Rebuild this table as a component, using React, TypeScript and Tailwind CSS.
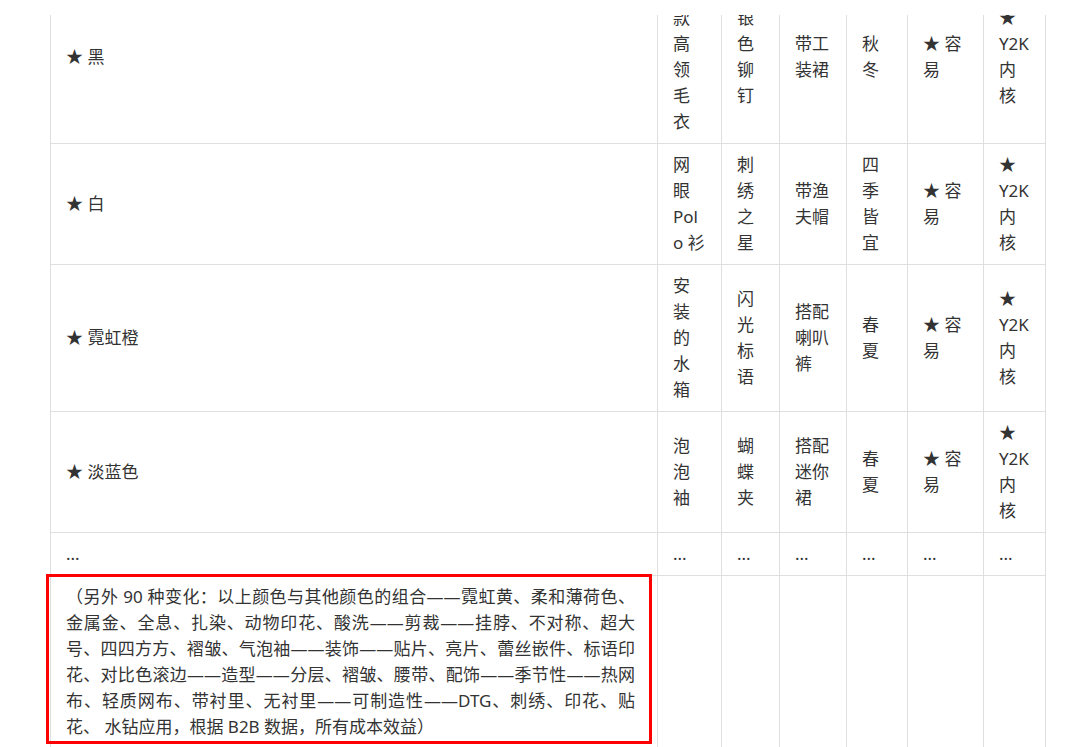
const rows: string[][] = [
  ["★ 黑", "短款高领毛衣", "银色铆钉", "带工装裙", "秋冬", "★ 容易", "★ Y2K 内核"],
  ["★ 白", "网眼 Polo 衫", "刺绣之星", "带渔夫帽", "四季皆宜", "★ 容易", "★ Y2K 内核"],
  ["★ 霓虹橙", "安装的水箱", "闪光标语", "搭配喇叭裤", "春夏", "★ 容易", "★ Y2K 内核"],
  ["★ 淡蓝色", "泡泡袖", "蝴蝶夹", "搭配迷你裙", "春夏", "★ 容易", "★ Y2K 内核"],
  ["...", "...", "...", "...", "...", "...", "..."],
];

const note =
  "（另外 90 种变化：以上颜色与其他颜色的组合——霓虹黄、柔和薄荷色、金属金、全息、扎染、动物印花、酸洗——剪裁——挂脖、不对称、超大号、四四方方、褶皱、气泡袖——装饰——贴片、亮片、蕾丝嵌件、标语印花、对比色滚边——造型——分层、褶皱、腰带、配饰——季节性——热网布、轻质网布、带衬里、无衬里——可制造性——DTG、刺绣、印花、贴花、 水钻应用，根据 B2B 数据，所有成本效益）";

const cell = "border border-[#dfdfdf] px-[15px] py-2 align-middle [overflow-wrap:anywhere]";

export default function App() {
  return (
    <div className="min-h-screen bg-white">
      <div className="mt-[15px] h-[732px] overflow-hidden pl-[50px]">
        <table className="-mt-[45px] w-[995px] table-fixed border-collapse font-['Noto_Sans','Noto_Sans_CJK_SC',sans-serif] text-[17px] leading-[26px] text-[#333]">
          <colgroup>
            <col className="w-[607px]" />
            <col className="w-[64px]" />
            <col className="w-[58px]" />
            <col className="w-[67px]" />
            <col className="w-[61px]" />
            <col className="w-[76px]" />
            <col className="w-[62px]" />
          </colgroup>
          <tbody>
            {rows.map((row, i) => (
              <tr key={i}>
                {row.map((text, j) => (
                  <td key={j} className={cell}>
                    {text}
                  </td>
                ))}
              </tr>
            ))}
            <tr>
              <td className={`${cell} relative pr-[22px] text-justify`}>
                {/* annotation box */}
                <div className="pointer-events-none absolute left-[-5px] top-[-2px] h-[170px] w-[606px] border-[3px] border-[#ff0000]" />
                {note}
              </td>
              <td className={cell}></td>
              <td className={cell}></td>
              <td className={cell}></td>
              <td className={cell}></td>
              <td className={cell}></td>
              <td className={cell}></td>
            </tr>
          </tbody>
        </table>
      </div>
    </div>
  );
}
